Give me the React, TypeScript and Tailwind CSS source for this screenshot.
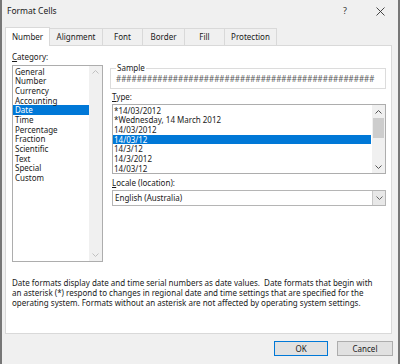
import React from "react";

const Chev = ({ dir, color }: { dir: "up" | "down"; color: string }) => (
  <svg width="7" height="4" viewBox="0 0 7 4">
    <polyline
      points={dir === "up" ? "0.5,3.5 3.5,0.5 6.5,3.5" : "0.5,0.5 3.5,3.5 6.5,0.5"}
      fill="none"
      stroke={color}
      strokeWidth="1"
    />
  </svg>
);

const categories = [
  "General",
  "Number",
  "Currency",
  "Accounting",
  "Date",
  "Time",
  "Percentage",
  "Fraction",
  "Scientific",
  "Text",
  "Special",
  "Custom",
];

const types = [
  "*14/03/2012",
  "*Wednesday, 14 March 2012",
  "14/03/2012",
  "14/03/12",
  "14/3/12",
  "14/3/2012",
  "14/03/12",
];

const tabs = [
  { label: "Number", w: "w-[45px]" },
  { label: "Alignment", w: "w-[53px]" },
  { label: "Font", w: "w-[40px]" },
  { label: "Border", w: "w-[42px]" },
  { label: "Fill", w: "w-[40px]" },
  { label: "Protection", w: "w-[52px]" },
];

export default function App() {
  return (
    <div className="w-[400px] h-[364px] bg-[#f0f0f0] border-x-2 border-[#777777] font-['Noto_Sans',sans-serif] text-[#1a1a1a] text-[8px] overflow-hidden">
      {/* Title bar */}
      <div className="h-[22px] flex items-center pl-[5px] relative">
        <span className="text-[8.5px]">Format Cells</span>
        <span className="ml-auto mr-[29px] text-[9px] text-[#333]">?</span>
        <svg width="9" height="9" viewBox="0 0 9 9" className="mr-[13px]">
          <path d="M0.5 0.5 L8.5 8.5 M8.5 0.5 L0.5 8.5" stroke="#333" strokeWidth="0.9" />
        </svg>
      </div>

      {/* Tabs */}
      <div className="mt-[5px] ml-[3px] flex items-end -mb-px relative z-10">
        {tabs.map((t, i) =>
          i === 0 ? (
            <div
              key={t.label}
              className={`${t.w} h-[19px] bg-white border border-b-0 border-[#d9d9d9] flex items-center justify-center`}
            >
              {t.label}
            </div>
          ) : (
            <div
              key={t.label}
              className={`${t.w} h-[18px] bg-[#f0f0f0] border-t border-r border-b border-[#d9d9d9] flex items-center justify-center`}
            >
              {t.label}
            </div>
          )
        )}
      </div>

      {/* Panel */}
      <div className="ml-[3px] w-[387px] h-[289px] bg-white border border-[#d9d9d9] pl-[6px] pt-[5px]">
        <div className="flex">
          {/* Category column */}
          <div className="w-[91px]">
            <div className="h-[12px] leading-[12px] mb-[2px]">
              <span className="underline">C</span>ategory:
            </div>
            <div className="h-[197px] border border-[#adadad] flex">
              <div className="flex-1 pt-[0.5px]">
                {categories.map((c) => (
                  <div
                    key={c}
                    className={`h-[9.7px] leading-[9.7px] pl-[2px] ${
                      c === "Date" ? "bg-[#0078d7] text-white" : ""
                    }`}
                  >
                    {c}
                  </div>
                ))}
              </div>
              <div className="w-[13px] bg-[#f0f0f0] flex flex-col items-center justify-between py-[4px]">
                <Chev dir="up" color="#c0c0c0" />
                <Chev dir="down" color="#c0c0c0" />
              </div>
            </div>
          </div>

          {/* Right column */}
          <div className="ml-[7px] w-[276px]">
            <fieldset className="mt-[11px] border border-[#dcdcdc] px-[5px] pb-[4px]">
              <legend className="px-[1px] h-[12px] leading-[12px]">Sample</legend>
              <div className="h-[10px] leading-[10px] text-[#5a5a5a] whitespace-nowrap">
                {"#".repeat(50)}
              </div>
            </fieldset>

            <div className="mt-[2px] h-[12px] leading-[12px] ml-[2px]">
              <span className="underline">T</span>ype:
            </div>
            <div className="mt-[1px] ml-[2px] h-[70px] border border-[#adadad] flex">
              <div className="flex-1 pt-[0.5px] pr-[1px]">
                {types.map((t, i) => (
                  <div
                    key={i}
                    className={`h-[9.7px] leading-[9.7px] pl-[1px] ${
                      i === 3 ? "bg-[#0078d7] text-white" : ""
                    }`}
                  >
                    {t}
                  </div>
                ))}
              </div>
              <div className="w-[13px] bg-[#f0f0f0] flex flex-col items-center">
                <div className="h-[13px] flex items-center">
                  <Chev dir="up" color="#555" />
                </div>
                <div className="w-[11px] h-[20px] bg-[#cdcdcd]" />
                <div className="flex-1" />
                <div className="h-[13px] flex items-center">
                  <Chev dir="down" color="#555" />
                </div>
              </div>
            </div>

            <div className="mt-[3px] h-[12px] leading-[12px] ml-[2px]">
              <span className="underline">L</span>ocale (location):
            </div>
            <div className="mt-[1px] ml-[2px] h-[16px] border border-[#b5b5b5] flex items-center">
              <span className="pl-[2px] flex-1">English (Australia)</span>
              <div className="w-[13px] h-full bg-[#e8e8e8] border-l border-[#c8c8c8] flex items-center justify-center">
                <Chev dir="down" color="#666" />
              </div>
            </div>
          </div>
        </div>

        <div className="mt-[16px] leading-[10px] whitespace-nowrap">
          <div>Date formats display date and time serial numbers as date values.&nbsp; Date formats that begin with</div>
          <div>an asterisk (*) respond to changes in regional date and time settings that are specified for the</div>
          <div>operating system. Formats without an asterisk are not affected by operating system settings.</div>
        </div>
      </div>

      {/* Footer */}
      <div className="mt-[7px] flex justify-end pr-[5px] gap-[9px]">
        <button className="w-[54px] h-[15px] bg-[#e1e1e1] border border-[#0078d7] flex items-center justify-center text-[8px]">
          OK
        </button>
        <button className="w-[56px] h-[15px] bg-[#e1e1e1] border border-[#adadad] flex items-center justify-center text-[8px]">
          Cancel
        </button>
      </div>
    </div>
  );
}
